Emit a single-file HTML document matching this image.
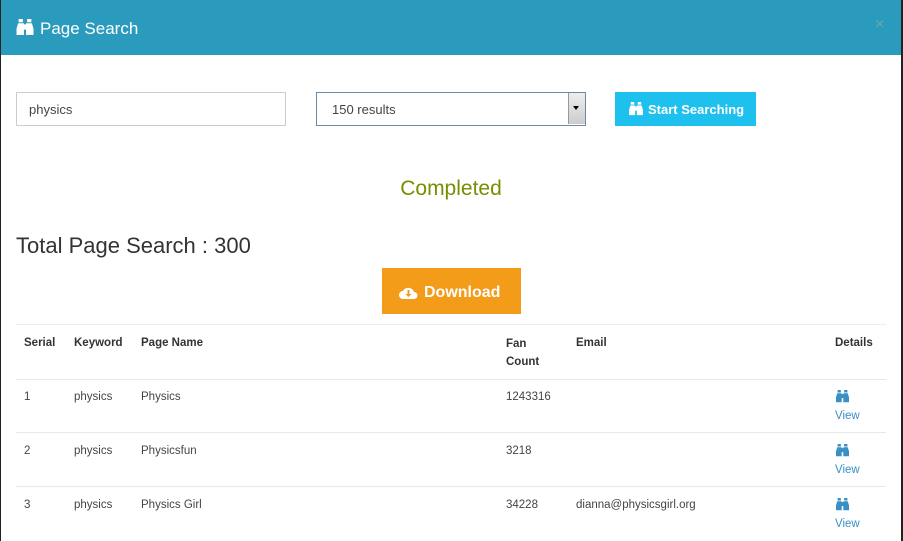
<!DOCTYPE html>
<html><head><style>
body{margin:0;width:903px;height:541px;overflow:hidden;background:#222;font-family:"Liberation Sans",sans-serif;position:relative}
.m{position:absolute;left:1px;top:0;width:900px;height:541px;background:#fff}
.h{position:absolute;left:0;top:0;width:900px;height:55px;background:#2a9bbd}
.a{position:absolute;white-space:nowrap}
</style></head><body>
<div class="m">
<div class="h">
<svg class="a" style="left:15px;top:19px" width="18" height="17" viewBox="0 0 16 16"><path fill="#fff" d="M2 0h4v3H2zM10 0h4v3h-4zM1.5 4H7v11H0V9zM9 4h5.5L16 9v6H9zM7 5h2v5H7z"/></svg>
<div class="a" style="left:39px;top:19px;color:#fff;font-size:17px">Page Search</div>
<div class="a" style="left:874px;top:16px;color:#6aa;font-size:16px">×</div>
</div>
<div class="a" style="left:15px;top:92px;width:268px;height:32px;border:1px solid #ccc"></div>
<div class="a" style="left:28px;top:102px;font-size:13px;color:#444">physics</div>
<div class="a" style="left:315px;top:92px;width:268px;height:32px;border:1px solid #6a8aa8"></div>
<div class="a" style="left:331px;top:102px;font-size:13px;color:#444">150 results</div>
<div class="a" style="left:567px;top:93px;width:16px;height:31px;background:linear-gradient(#eee,#ccc);border-left:1px solid #999"></div>
<div class="a" style="left:572px;top:106px;width:0;height:0;border-left:3px solid transparent;border-right:3px solid transparent;border-top:4px solid #000"></div>
<div class="a" style="left:614px;top:92px;width:141px;height:34px;background:#1ec0ee"></div>
<svg class="a" style="left:628px;top:102px" width="14" height="14" viewBox="0 0 16 16"><path fill="#fff" d="M2 0h4v3H2zM10 0h4v3h-4zM1.5 4H7v11H0V9zM9 4h5.5L16 9v6H9zM7 5h2v5H7z"/></svg>
<div class="a" style="left:647px;top:102px;color:#fff;font-size:13px;font-weight:bold">Start Searching</div>
<div class="a" style="left:0;width:900px;top:177px;text-align:center;color:#7a8c00;font-size:21px">Completed</div>
<div class="a" style="left:15px;top:233px;font-size:22px;color:#333">Total Page Search : 300</div>
<div class="a" style="left:381px;top:268px;width:139px;height:46px;background:#f39c1a"></div>
<svg class="a" style="left:398px;top:285px" width="19" height="14" viewBox="0 0 19 14"><path fill="#fff" d="M4 14a4 4 0 0 1 0-8 6 6 0 0 1 11 1 3.5 3.5 0 0 1 0 7z"/><path fill="#f39c1a" d="M8.5 5h2v4h2l-3 3-3-3h2z"/></svg>
<div class="a" style="left:423px;top:284px;color:#fff;font-size:16px;font-weight:bold">Download</div>
<div class="a" style="left:15px;top:324px;width:870px;border-top:1px solid #eee"></div>
<div class="a" style="left:15px;top:379px;width:870px;border-top:1px solid #e8e8e8"></div>
<div class="a" style="left:15px;top:432px;width:870px;border-top:1px solid #e8e8e8"></div>
<div class="a" style="left:15px;top:486px;width:870px;border-top:1px solid #e8e8e8"></div>
<div class="a" style="left:23px;top:337px;font-size:11.5px;font-weight:bold;color:#333">Serial</div>
<div class="a" style="left:73px;top:337px;font-size:11.5px;font-weight:bold;color:#333">Keyword</div>
<div class="a" style="left:140px;top:337px;font-size:11.5px;font-weight:bold;color:#333">Page Name</div>
<div class="a" style="left:505px;top:335px;font-size:11.5px;font-weight:bold;color:#333;line-height:18px">Fan<br>Count</div>
<div class="a" style="left:575px;top:337px;font-size:11.5px;font-weight:bold;color:#333">Email</div>
<div class="a" style="left:834px;top:337px;font-size:11.5px;font-weight:bold;color:#333">Details</div>

<div class="a" style="left:23px;top:391px;font-size:11.5px;color:#444">1</div>
<div class="a" style="left:73px;top:391px;font-size:11.5px;color:#444">physics</div>
<div class="a" style="left:140px;top:391px;font-size:11.5px;color:#444">Physics</div>
<div class="a" style="left:505px;top:391px;font-size:11.5px;color:#444">1243316</div>

<div class="a" style="left:23px;top:445px;font-size:11.5px;color:#444">2</div>
<div class="a" style="left:73px;top:445px;font-size:11.5px;color:#444">physics</div>
<div class="a" style="left:140px;top:445px;font-size:11.5px;color:#444">Physicsfun</div>
<div class="a" style="left:505px;top:445px;font-size:11.5px;color:#444">3218</div>

<div class="a" style="left:23px;top:499px;font-size:11.5px;color:#444">3</div>
<div class="a" style="left:73px;top:499px;font-size:11.5px;color:#444">physics</div>
<div class="a" style="left:140px;top:499px;font-size:11.5px;color:#444">Physics Girl</div>
<div class="a" style="left:505px;top:499px;font-size:11.5px;color:#444">34228</div>
<div class="a" style="left:575px;top:499px;font-size:11.5px;color:#444">dianna@physicsgirl.org</div>

<svg class="a" style="left:835px;top:390px" width="13" height="13" viewBox="0 0 16 16"><path fill="#3a8fc5" d="M2 0h4v3H2zM10 0h4v3h-4zM1.5 4H7v11H0V9zM9 4h5.5L16 9v6H9zM7 5h2v5H7z"/></svg>
<div class="a" style="left:834px;top:410px;font-size:11.5px;color:#3a8fc5">View</div>
<svg class="a" style="left:835px;top:444px" width="13" height="13" viewBox="0 0 16 16"><path fill="#3a8fc5" d="M2 0h4v3H2zM10 0h4v3h-4zM1.5 4H7v11H0V9zM9 4h5.5L16 9v6H9zM7 5h2v5H7z"/></svg>
<div class="a" style="left:834px;top:464px;font-size:11.5px;color:#3a8fc5">View</div>
<svg class="a" style="left:835px;top:498px" width="13" height="13" viewBox="0 0 16 16"><path fill="#3a8fc5" d="M2 0h4v3H2zM10 0h4v3h-4zM1.5 4H7v11H0V9zM9 4h5.5L16 9v6H9zM7 5h2v5H7z"/></svg>
<div class="a" style="left:834px;top:518px;font-size:11.5px;color:#3a8fc5">View</div>
</div>
</body></html>
